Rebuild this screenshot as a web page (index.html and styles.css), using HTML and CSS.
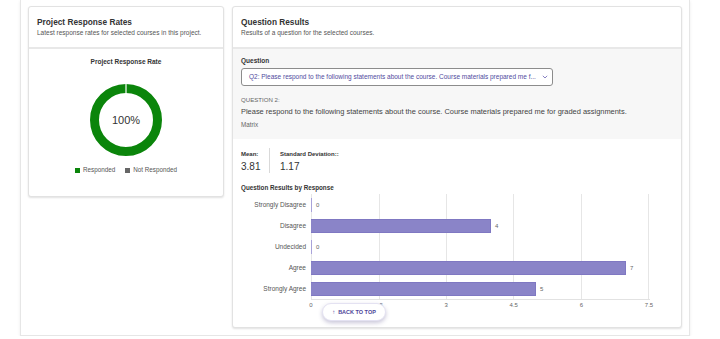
FILE: index.html
```html
<!DOCTYPE html>
<html lang="en">
<head>
<meta charset="utf-8">
<title>Project Results</title>
<link rel="stylesheet" href="styles.css">
</head>
<body>
<div class="panel">
  <section class="card card-rates">
    <header class="card-head">
      <h2>Project Response Rates</h2>
      <p>Latest response rates for selected courses in this project.</p>
    </header>
    <div class="rates-body">
      <h3 class="chart-title">Project Response Rate</h3>
      <div class="donut">
        <svg viewBox="0 0 72 72" width="72" height="72">
          <circle cx="36" cy="36" r="31.5" fill="none" stroke="#0b850b" stroke-width="9"/>
          <rect x="35.4" y="0" width="1.2" height="10" fill="#ffffff"/>
        </svg>
        <span class="donut-value">100%</span>
      </div>
      <ul class="legend">
        <li><span class="swatch swatch-green"></span>Responded</li>
        <li><span class="swatch swatch-gray"></span>Not Responded</li>
      </ul>
    </div>
  </section>

  <section class="card card-question">
    <header class="card-head">
      <h2>Question Results</h2>
      <p>Results of a question for the selected courses.</p>
    </header>
    <div class="q-area">
      <div class="field-label">Question</div>
      <div class="select">
        <span class="select-text">Q2: Please respond to the following statements about the course. Course materials prepared me f...</span>
        <svg class="chevron" viewBox="0 0 6 4" width="6" height="4"><path d="M0.8 0.8 L3 3 L5.2 0.8" fill="none" stroke="#6a62b3" stroke-width="0.8"/></svg>
      </div>
      <div class="q-kicker">QUESTION 2:</div>
      <div class="q-text">Please respond to the following statements about the course. Course materials prepared me for graded assignments.</div>
      <div class="q-type">Matrix</div>
    </div>
    <div class="results">
      <div class="stats">
        <div class="stat stat-mean">
          <div class="stat-label">Mean:</div>
          <div class="stat-value">3.81</div>
        </div>
        <div class="stat stat-sd">
          <div class="stat-label">Standard Deviation::</div>
          <div class="stat-value">1.17</div>
        </div>
      </div>
      <h3 class="results-title">Question Results by Response</h3>
      <div class="chart">
        <div class="chart-labels">
          <div class="row-label">Strongly Disagree</div>
          <div class="row-label">Disagree</div>
          <div class="row-label">Undecided</div>
          <div class="row-label">Agree</div>
          <div class="row-label">Strongly Agree</div>
        </div>
        <div class="plot">
          <div class="bar-row"><div class="bar bar-zero" style="width:1px"></div><span class="bar-val">0</span></div>
          <div class="bar-row"><div class="bar" style="width:180px"></div><span class="bar-val">4</span></div>
          <div class="bar-row"><div class="bar bar-zero" style="width:1px"></div><span class="bar-val">0</span></div>
          <div class="bar-row"><div class="bar" style="width:315px"></div><span class="bar-val">7</span></div>
          <div class="bar-row"><div class="bar" style="width:225px"></div><span class="bar-val">5</span></div>
        </div>
      </div>
      <div class="axis">
        <span class="tick"><span>0</span></span>
        <span class="tick"><span>1.5</span></span>
        <span class="tick"><span>3</span></span>
        <span class="tick"><span>4.5</span></span>
        <span class="tick"><span>6</span></span>
        <span class="tick"><span>7.5</span></span>
      </div>
    </div>
  </section>
</div>
<button class="back-top" type="button"><span class="arrow">&#8593;</span>BACK TO TOP</button>
</body>
</html>
```

FILE: styles.css
```css
body {
  margin: 0;
  background: #ffffff;
  font-family: "Liberation Sans", Arial, sans-serif;
  color: #333333;
}

.panel {
  margin-left: 20px;
  width: 670px;
  box-sizing: border-box;
  border: 1px solid #e6e6e6;
  border-top: 0;
  padding: 6px 7px 7px;
  display: flex;
  gap: 8px;
  align-items: flex-start;
  box-shadow: 0 1px 3px rgba(0, 0, 0, 0.08);
}

.card {
  background: #ffffff;
  border: 1px solid #e2e2e2;
  border-radius: 3px;
  box-shadow: 0 1px 2px rgba(0, 0, 0, 0.12);
  box-sizing: border-box;
  overflow: hidden;
}

.card-rates { width: 196px; }
.card-question { width: 450px; }

.card-head {
  padding: 10px 8px;
  border-bottom: 2px solid #e8e8e8;
}

.card-head h2 {
  margin: 0;
  font-size: 8.3px;
  line-height: 10px;
  font-weight: 700;
  color: #333333;
}

.card-head p {
  margin: 2px 0 0;
  font-size: 6.5px;
  line-height: 8px;
  color: #555555;
}

/* Response rate card */
.rates-body {
  padding: 9px 8px 22px;
  display: flex;
  flex-direction: column;
  align-items: center;
}

.chart-title {
  margin: 0;
  font-size: 6.5px;
  line-height: 8px;
  font-weight: 700;
  color: #333333;
}

.donut {
  margin-top: 18px;
  width: 72px;
  height: 72px;
  display: grid;
  place-items: center;
}

.donut svg,
.donut-value {
  grid-area: 1 / 1;
}

.donut svg { display: block; }

.donut-value {
  font-size: 11px;
  line-height: 12px;
  color: #333333;
}

.legend {
  list-style: none;
  margin: 10px 0 0;
  padding: 0;
  display: flex;
  gap: 10px;
  font-size: 6.3px;
  line-height: 8px;
  color: #555555;
}

.legend li {
  display: flex;
  align-items: center;
  gap: 3px;
}

.swatch {
  width: 5px;
  height: 5px;
  display: inline-block;
}

.swatch-green { background: #0b850b; }
.swatch-gray { background: #666666; }

/* Question card */
.q-area {
  background: #f7f7f7;
  padding: 8px 8px 10px;
}

.field-label {
  font-size: 6.5px;
  line-height: 8px;
  font-weight: 700;
  color: #333333;
}

.select {
  margin-top: 3px;
  width: 312px;
  height: 18px;
  box-sizing: border-box;
  border: 1px solid #8c8c8c;
  border-radius: 3px;
  background: #ffffff;
  padding: 0 4px 0 7px;
  display: flex;
  align-items: center;
  justify-content: space-between;
}

.select-text {
  font-size: 6.5px;
  line-height: 8px;
  color: #514b9e;
  white-space: nowrap;
}

.chevron { display: block; }

.q-kicker {
  margin-top: 9.5px;
  font-size: 6.1px;
  line-height: 8px;
  color: #666666;
}

.q-text {
  margin-top: 3.5px;
  font-size: 7.45px;
  line-height: 10px;
  color: #444444;
}

.q-type {
  margin-top: 4px;
  font-size: 6.3px;
  line-height: 8px;
  color: #666666;
}

.results {
  padding: 9px 8px 18px;
}

.stats {
  display: flex;
}

.stat {
  padding: 2px 0 0.5px;
}

.stat-mean {
  width: 29px;
  box-sizing: border-box;
  border-right: 1px solid #d9d9d9;
}

.stat-sd {
  padding-left: 10px;
}

.stat-label {
  font-size: 6px;
  line-height: 8px;
  font-weight: 700;
  color: #333333;
}

.stat-value {
  margin-top: 2.5px;
  font-size: 10px;
  line-height: 12px;
  color: #333333;
}

.results-title {
  margin: 10.5px 0 0;
  font-size: 6.3px;
  line-height: 8px;
  font-weight: 700;
  color: #333333;
}

.chart {
  margin-top: 2.5px;
  display: flex;
  gap: 5px;
}

.chart-labels {
  width: 65px;
}

.row-label {
  height: 21px;
  display: flex;
  align-items: center;
  justify-content: flex-end;
  font-size: 6.5px;
  color: #555555;
}

.plot {
  width: 339px;
  border-bottom: 1px solid #e2e2e2;
  background: repeating-linear-gradient(to right, #e6e6e6 0, #e6e6e6 1px, transparent 1px, transparent 67.5px);
}

.bar-row {
  height: 21px;
  display: flex;
  align-items: center;
}

.bar {
  height: 14px;
  box-sizing: border-box;
  background: #8a84c8;
  border: 1px solid #7f78c2;
  border-left: 0;
}

.bar-zero {
  border: 0;
  background: #a9a3da;
}

.bar-val {
  margin-left: 4px;
  font-size: 6px;
  color: #666666;
}

.axis {
  margin: 1px 0 0 70px;
  width: 338px;
  display: flex;
  justify-content: space-between;
  font-size: 6px;
  line-height: 8px;
  color: #666666;
}

.tick {
  width: 0;
  display: flex;
  justify-content: center;
}

.back-top {
  position: absolute;
  left: 322px;
  top: 303px;
  width: 64px;
  height: 18px;
  padding: 0;
  border: 1px solid #e4e2f2;
  border-radius: 9px;
  background: #ffffff;
  box-shadow: 0 2px 4px rgba(60, 50, 120, 0.28);
  font-family: "Liberation Sans", Arial, sans-serif;
  font-size: 5.5px;
  font-weight: 700;
  color: #4c4498;
  display: flex;
  align-items: center;
  justify-content: center;
  gap: 3px;
}

.arrow {
  font-size: 6px;
}
```
